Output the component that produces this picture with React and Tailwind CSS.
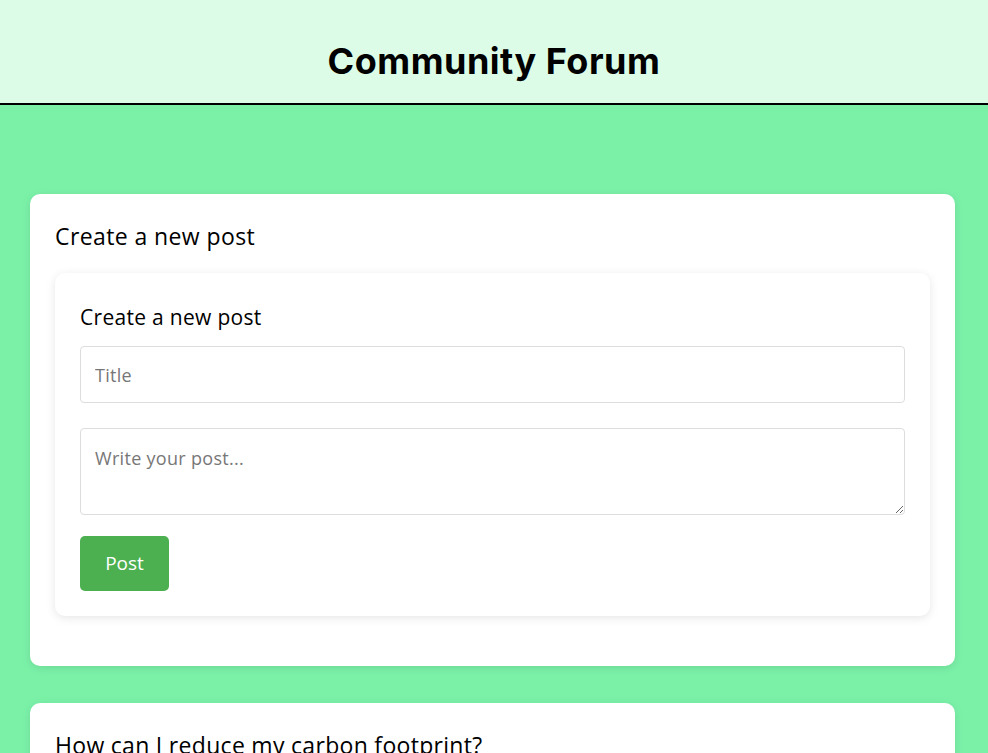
import React, { useState } from 'react';

function NewPostForm() {
  const [title, setTitle] = useState('');
  const [body, setBody] = useState('');

  return (
    <div className="bg-white rounded-[10px] shadow-[0_2px_10px_rgba(0,0,0,0.1)] p-[25px]">
      <h3 className="text-[21px] leading-[28px] tracking-[0.3px] mt-[5px] mb-[15px] text-black">Create a new post</h3>
      <input
        value={title}
        onChange={e => setTitle(e.target.value)}
        placeholder="Title"
        className="block w-full h-[57px] px-[14px] border border-[#dddddd] rounded-[4px] text-[18px] tracking-[0.3px] placeholder:text-[#777] outline-none"
      />
      <textarea
        value={body}
        onChange={e => setBody(e.target.value)}
        placeholder="Write your post..."
        className="block w-full h-[87px] mt-[25px] px-[14px] py-[16px] border border-[#dddddd] rounded-[4px] text-[18px] tracking-[0.3px] leading-[26px] placeholder:text-[#777] outline-none"
      />
      <button className="mt-[21px] w-[89px] h-[55px] bg-[#4caf50] text-white text-[19px] font-medium rounded-[5px]">
        Post
      </button>
    </div>
  );
}

export default function App() {
  return (
    <div className="min-h-screen bg-[#7bf1a8] font-['Open_Sans',sans-serif] text-black">
      <header className="h-[105px] bg-[#dcfce7] border-b-2 border-black flex items-center justify-center">
        <h1 className="text-[36px] font-bold font-['Inter',sans-serif] tracking-[0.5px] pt-[18px]">Community Forum</h1>
      </header>

      <main className="pt-[89px] pl-[30px] pr-[33px] pb-10 flex flex-col gap-[37px]">
        {/* create post */}
        <section className="bg-white rounded-[10px] shadow-[0_2px_10px_rgba(0,0,0,0.1)] px-[25px] pt-[27px] pb-[50px]">
          <h2 className="text-[23px] leading-[30px] tracking-[0.4px] mb-[22px]">Create a new post</h2>
          <NewPostForm />
        </section>

        {/* posts */}
        <section className="bg-white rounded-[10px] shadow-[0_2px_10px_rgba(0,0,0,0.1)] px-[25px] pt-[27px] pb-[30px]">
          <h2 className="text-[23px] leading-[30px] tracking-[0.3px]">How can I reduce my carbon footprint?</h2>
          <p className="mt-3 text-[16px] text-[#333]">Looking for practical tips to lower my everyday impact.</p>
        </section>
      </main>
    </div>
  );
}
